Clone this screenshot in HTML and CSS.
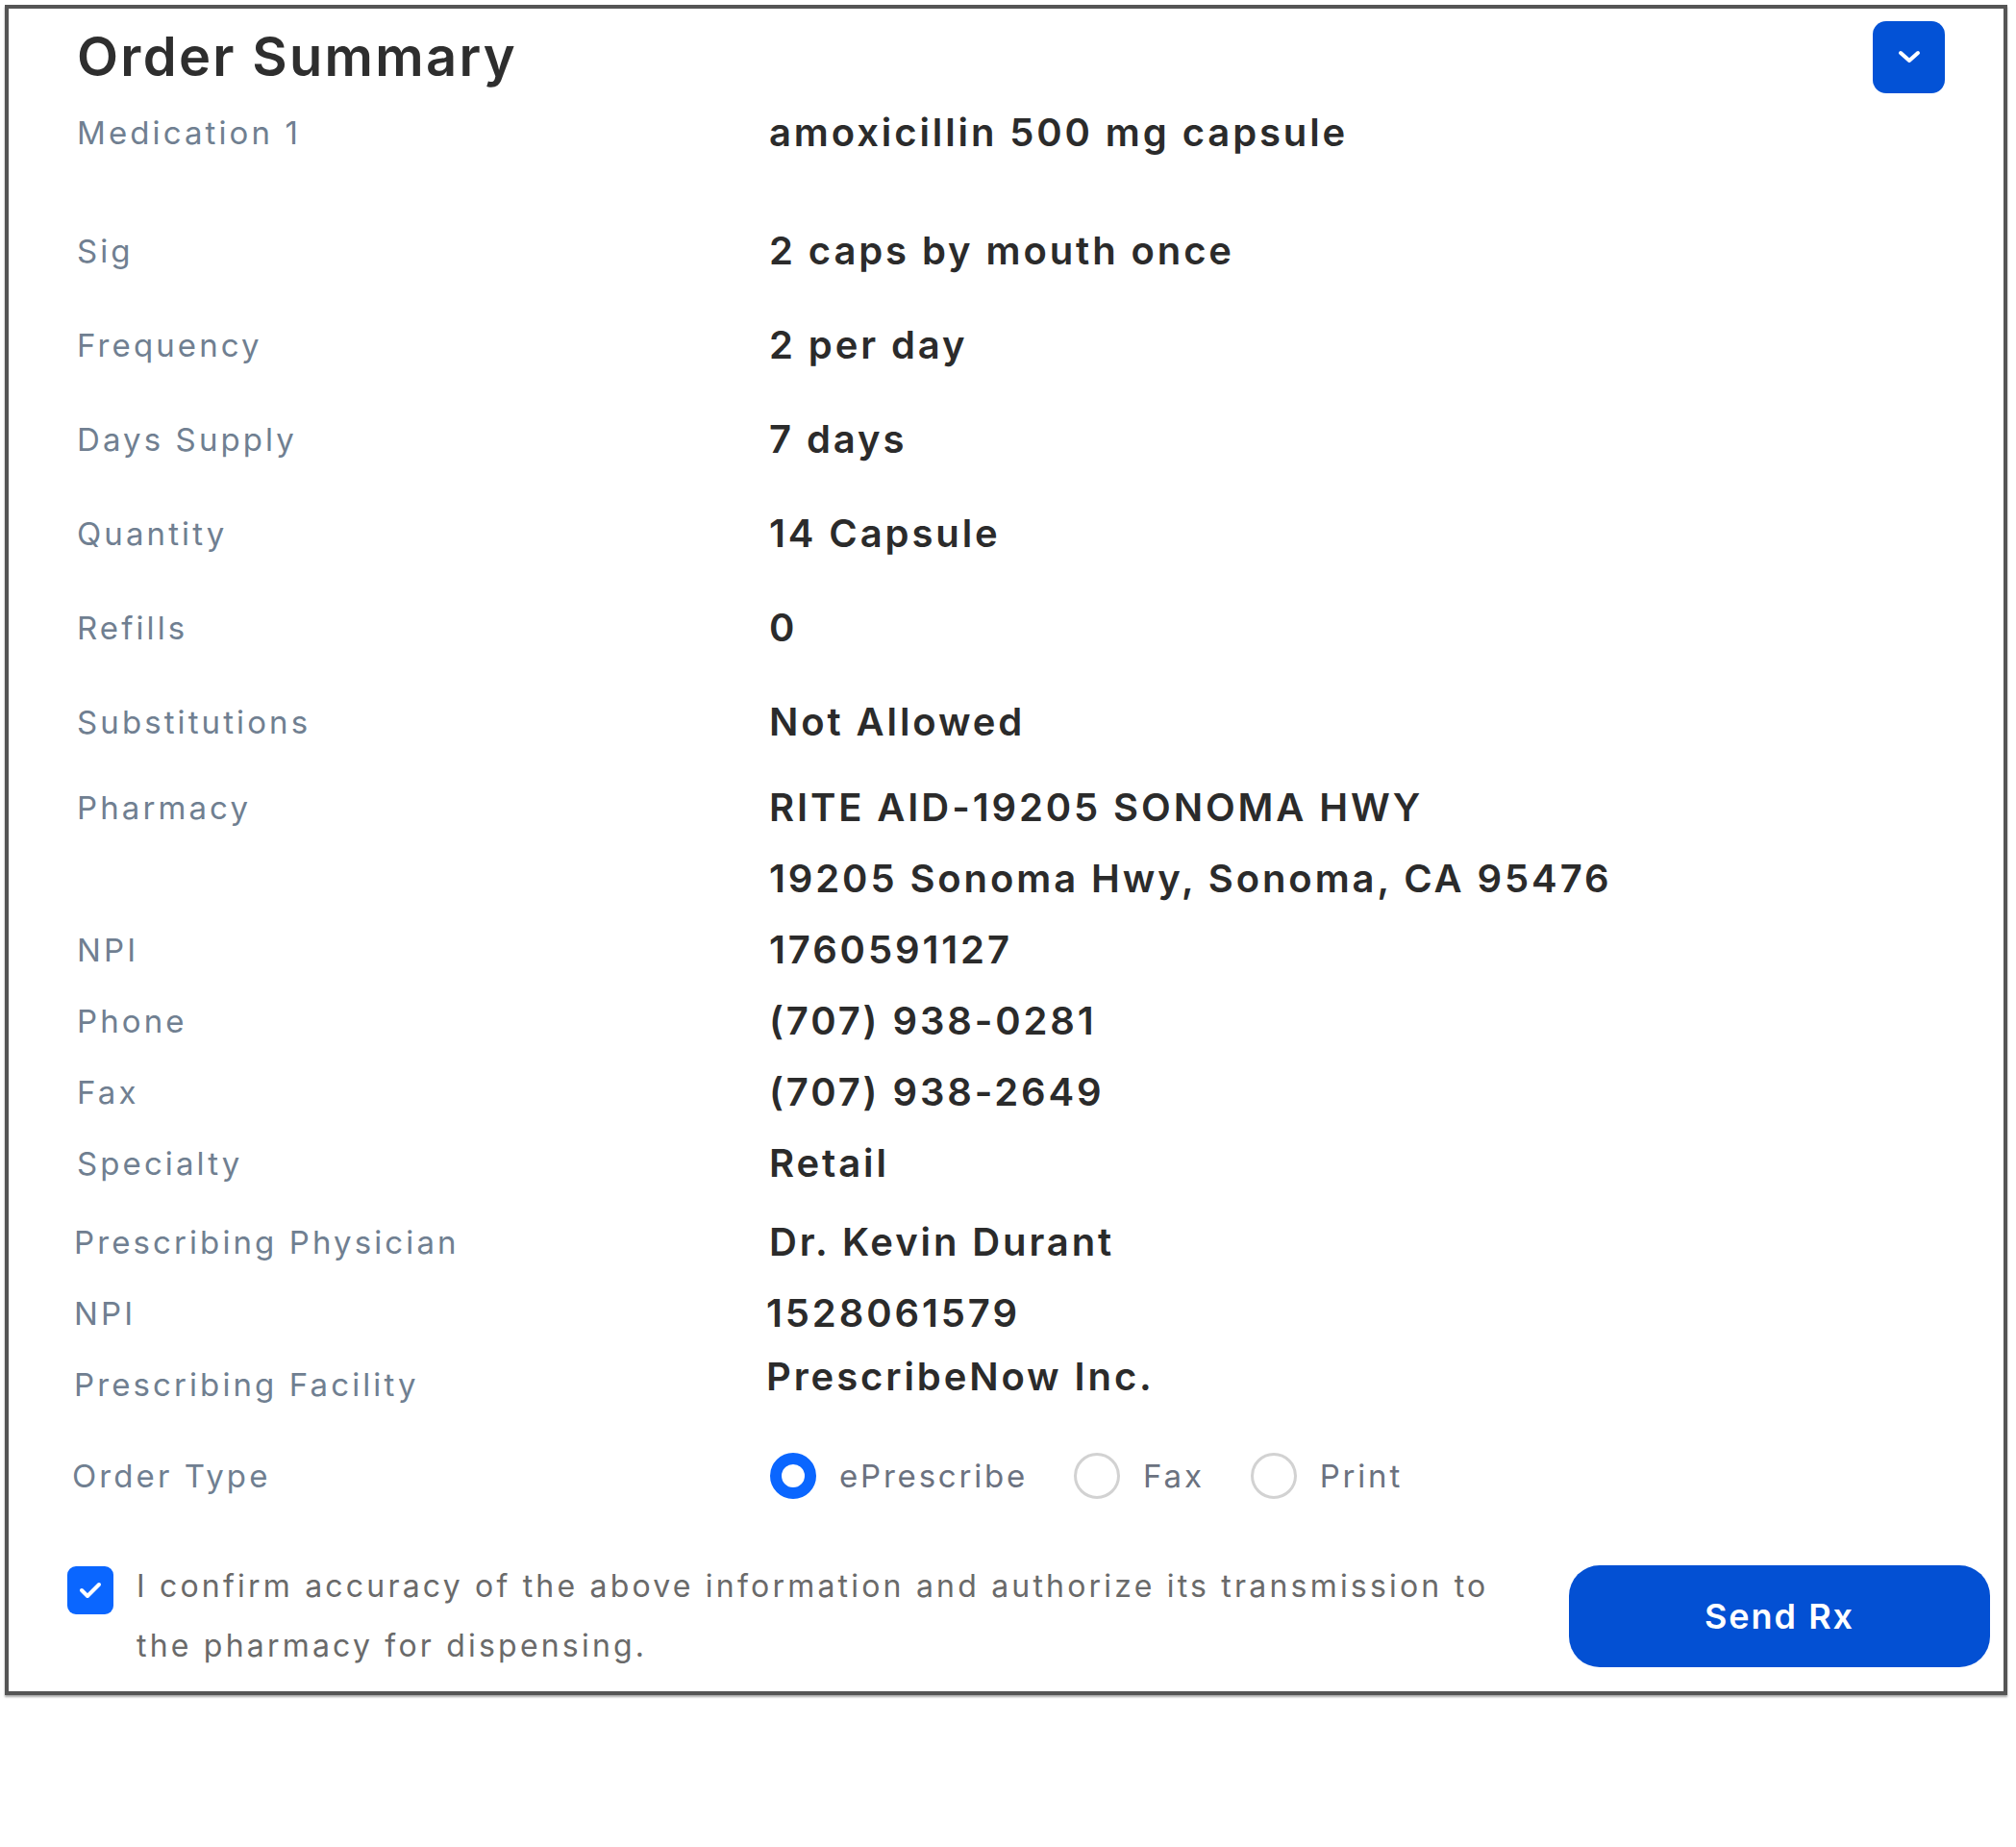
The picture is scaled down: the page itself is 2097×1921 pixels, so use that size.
FILE: index.html
```html
<!DOCTYPE html>
<html lang="en">
<head>
<meta charset="utf-8">
<title>Order Summary</title>
<link rel="stylesheet" href="styles.css">
</head>
<body>
<section class="card">
  <header class="head">
    <h1 class="title">Order Summary</h1>
    <button class="toggle" aria-label="Collapse">
      <svg width="28" height="18" viewBox="0 0 28 18"><path d="M5 5 L14 13 L23 5" fill="none" stroke="#fff" stroke-width="4" stroke-linecap="round" stroke-linejoin="round"/></svg>
    </button>
  </header>

  <div class="row row-med"><span class="label">Medication 1</span><span class="value">amoxicillin 500 mg capsule</span></div>

  <div class="group-a">
    <div class="row"><span class="label">Sig</span><span class="value">2 caps by mouth once</span></div>
    <div class="row"><span class="label">Frequency</span><span class="value">2 per day</span></div>
    <div class="row"><span class="label">Days Supply</span><span class="value">7 days</span></div>
    <div class="row"><span class="label">Quantity</span><span class="value">14 Capsule</span></div>
    <div class="row"><span class="label">Refills</span><span class="value">0</span></div>
    <div class="row"><span class="label">Substitutions</span><span class="value">Not Allowed</span></div>
  </div>

  <div class="group-b">
    <div class="row"><span class="label">Pharmacy</span><span class="value"><span class="line">RITE AID-19205 SONOMA HWY</span><span class="line">19205 Sonoma Hwy, Sonoma, CA 95476</span></span></div>
    <div class="row"><span class="label">NPI</span><span class="value">1760591127</span></div>
    <div class="row"><span class="label">Phone</span><span class="value">(707) 938-0281</span></div>
    <div class="row"><span class="label">Fax</span><span class="value">(707) 938-2649</span></div>
    <div class="row"><span class="label">Specialty</span><span class="value">Retail</span></div>
    <div class="row row-gap"><span class="label shift">Prescribing Physician</span><span class="value">Dr. Kevin Durant</span></div>
    <div class="row"><span class="label shift">NPI</span><span class="value shift">1528061579</span></div>
    <div class="row"><span class="label shift">Prescribing Facility</span><span class="value shift raise">PrescribeNow Inc.</span></div>
  </div>

  <div class="row row-order">
    <span class="label shift2">Order Type</span>
    <div class="options" role="radiogroup">
      <label class="opt"><span class="radio checked"></span><span class="opt-text">ePrescribe</span></label>
      <label class="opt"><span class="radio"></span><span class="opt-text">Fax</span></label>
      <label class="opt"><span class="radio"></span><span class="opt-text">Print</span></label>
    </div>
  </div>

  <footer class="confirm">
    <div class="consent">
      <span class="checkbox">
        <svg width="30" height="24" viewBox="0 0 30 24"><path d="M6 12 L12 18 L24 6" fill="none" stroke="#fff" stroke-width="4" stroke-linecap="round" stroke-linejoin="round"/></svg>
      </span>
      <p class="consent-text">I confirm accuracy of the above information and authorize its transmission to<br>the pharmacy for dispensing.</p>
    </div>
    <button class="send">Send Rx</button>
  </footer>
</section>
</body>
</html>
```

FILE: styles.css
```css
* { box-sizing: border-box; }
html, body { margin: 0; padding: 0; background: #fff; }
body { font-family: Inter, "Open Sans", "DejaVu Sans", sans-serif; }

.card {
  margin: 5px;
  width: 2083px;
  height: 1758px;
  border: 4px solid #555;
  box-shadow: 0 2px 2px rgba(0,0,0,0.35);
  background: #fff;
  display: flex;
  flex-direction: column;
}

.head {
  height: 100px;
  display: flex;
  align-items: center;
  justify-content: space-between;
  padding: 0 61px 0 71px;
}
.title {
  margin: 0;
  font-size: 56px;
  font-weight: 600;
  letter-spacing: 2.3px;
  color: #2e2e2e;
  line-height: 1;
}
.toggle {
  width: 75px;
  height: 75px;
  border: none;
  border-radius: 14px;
  background: #0352d6;
  display: flex;
  align-items: center;
  justify-content: center;
  padding: 0;
}
.toggle svg { display: block; }

.row {
  display: flex;
  padding-left: 71px;
}
.label {
  width: 720px;
  flex: none;
  font-size: 33px;
  letter-spacing: 3.1px;
  color: #707f91;
}
.value {
  font-size: 40px;
  font-weight: 600;
  letter-spacing: 2.9px;
  color: #2b2b2b;
  display: flex;
  flex-direction: column;
}

.row-med { height: 58px; line-height: 58px; }
.group-a { margin-top: 45px; }
.group-a .row { height: 98px; line-height: 98px; }
.group-b { margin-top: 3px; }
.group-b .row { min-height: 74px; line-height: 74px; }
.group-b .row-gap { margin-top: 8px; }
.label.shift { margin-left: -3px; width: 723px; }
.value.shift { margin-left: -3px; }
.raise { margin-top: -8px; }

.row-order { margin-top: 21px; height: 74px; align-items: center; }
.label.shift2 { margin-left: -5px; width: 726px; }
.options { display: flex; align-items: center; }
.opt { display: flex; align-items: center; margin-right: 48px; }
.radio {
  width: 48px; height: 48px; border-radius: 50%;
  border: 3px solid #d2d2d2;
  background: #fff;
  margin-right: 24px;
  flex: none;
}
.radio.checked { border: 12px solid #0a66ff; }
.opt-text { font-size: 33px; letter-spacing: 2.8px; color: #6b7280; }

.confirm {
  margin-top: 47px;
  display: flex;
  align-items: center;
  justify-content: space-between;
  padding: 0 14px 0 61px;
}
.consent { display: flex; align-items: flex-start; }
.checkbox {
  width: 48px; height: 50px;
  border-radius: 9px;
  background: #0a66ff;
  display: flex; align-items: center; justify-content: center;
  margin-top: 10px;
  flex: none;
}
.consent-text {
  margin: 0 0 0 24px;
  font-size: 32px;
  letter-spacing: 3.2px;
  line-height: 62px;
  color: #6a6a6a;
}
.send {
  width: 438px;
  height: 106px;
  border: none;
  border-radius: 32px;
  background: #0350d3;
  color: #fff;
  font-family: inherit;
  font-size: 36px;
  font-weight: 600;
  letter-spacing: 2px;
}
```
